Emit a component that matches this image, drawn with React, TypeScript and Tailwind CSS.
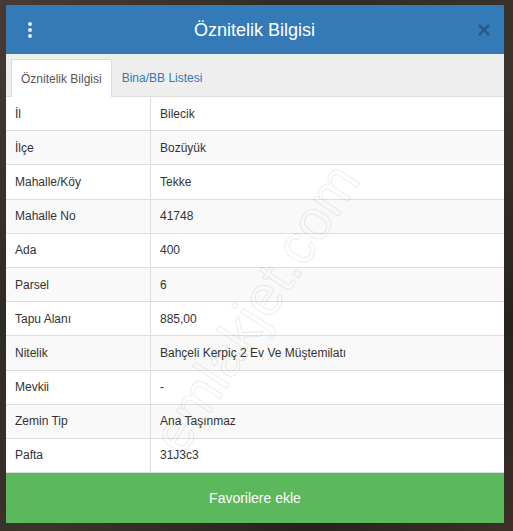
import React from "react";

const rows: [string, string][] = [
  ["İl", "Bilecik"],
  ["İlçe", "Bozüyük"],
  ["Mahalle/Köy", "Tekke"],
  ["Mahalle No", "41748"],
  ["Ada", "400"],
  ["Parsel", "6"],
  ["Tapu Alanı", "885,00"],
  ["Nitelik", "Bahçeli Kerpiç 2 Ev Ve Müştemilatı"],
  ["Mevkii", "-"],
  ["Zemin Tip", "Ana Taşınmaz"],
  ["Pafta", "31J3c3"],
];

export default function App() {
  return (
    <div
      className="w-[513px] h-[531px] overflow-hidden pt-[5px] pl-[6px] bg-[linear-gradient(135deg,#4a3a34_0%,#2f2b27_30%,#3b342c_55%,#26231f_80%,#3d3028_100%)]"
      style={{ fontFamily: '"Liberation Sans", Arial, sans-serif' }}
    >
      <div className="relative w-[498px] h-[518px] bg-white flex flex-col overflow-hidden">
        {/* header */}
        <div className="h-[49px] shrink-0 bg-[#337ab7] flex items-center justify-between px-[22px]">
          <div className="flex flex-col gap-[2px] items-center w-[4px]">
            <span className="w-[4px] h-[4px] rounded-full bg-[#e3edf7]" />
            <span className="w-[4px] h-[4px] rounded-full bg-[#e3edf7]" />
            <span className="w-[4px] h-[4px] rounded-full bg-[#e3edf7]" />
          </div>
          <div className="text-white text-[18px] leading-none">Öznitelik Bilgisi</div>
          <div className="text-[24px] font-bold leading-none text-black/25 -mr-[9px] mt-[1px]">×</div>
        </div>

        {/* tabs */}
        <div className="h-[43px] shrink-0 bg-[#eeeeee] pt-[5px] pl-[5px] flex border-b border-[#dddddd]">
          <div className="h-[38px] px-[9px] bg-white border border-[#dddddd] border-b-0 flex items-center text-[12px] text-[#555555] -mb-px">
            Öznitelik Bilgisi
          </div>
          <div className="h-[38px] px-[10px] flex items-center text-[12px] text-[#337ab7]">
            Bina/BB Listesi
          </div>
        </div>

        {/* attribute table */}
        <div className="flex flex-col">
          {rows.map(([label, value], i) => (
            <div
              key={label}
              className={`h-[34.2px] flex border-b border-[#dddddd] text-[12px] text-[#333333] ${
                i % 2 === 1 ? "bg-[#f9f9f9]" : "bg-white"
              }`}
            >
              <div className="w-[145px] shrink-0 pl-[9px] flex items-center border-r border-[#dddddd]">
                {label}
              </div>
              <div className="pl-[9px] flex items-center">{value}</div>
            </div>
          ))}
        </div>

        <div className="flex-1 bg-[#5cb85c] flex items-center justify-center text-white text-[14px]">
          Favorilere ekle
        </div>

        {/* watermark */}
        <div className="absolute left-[250px] top-[303px] -translate-x-1/2 -translate-y-1/2 -rotate-[57deg] text-[56px] text-transparent pointer-events-none whitespace-nowrap [-webkit-text-stroke:1px_rgba(0,0,0,0.08)]">
          emlakjet.com
        </div>
      </div>
    </div>
  );
}
